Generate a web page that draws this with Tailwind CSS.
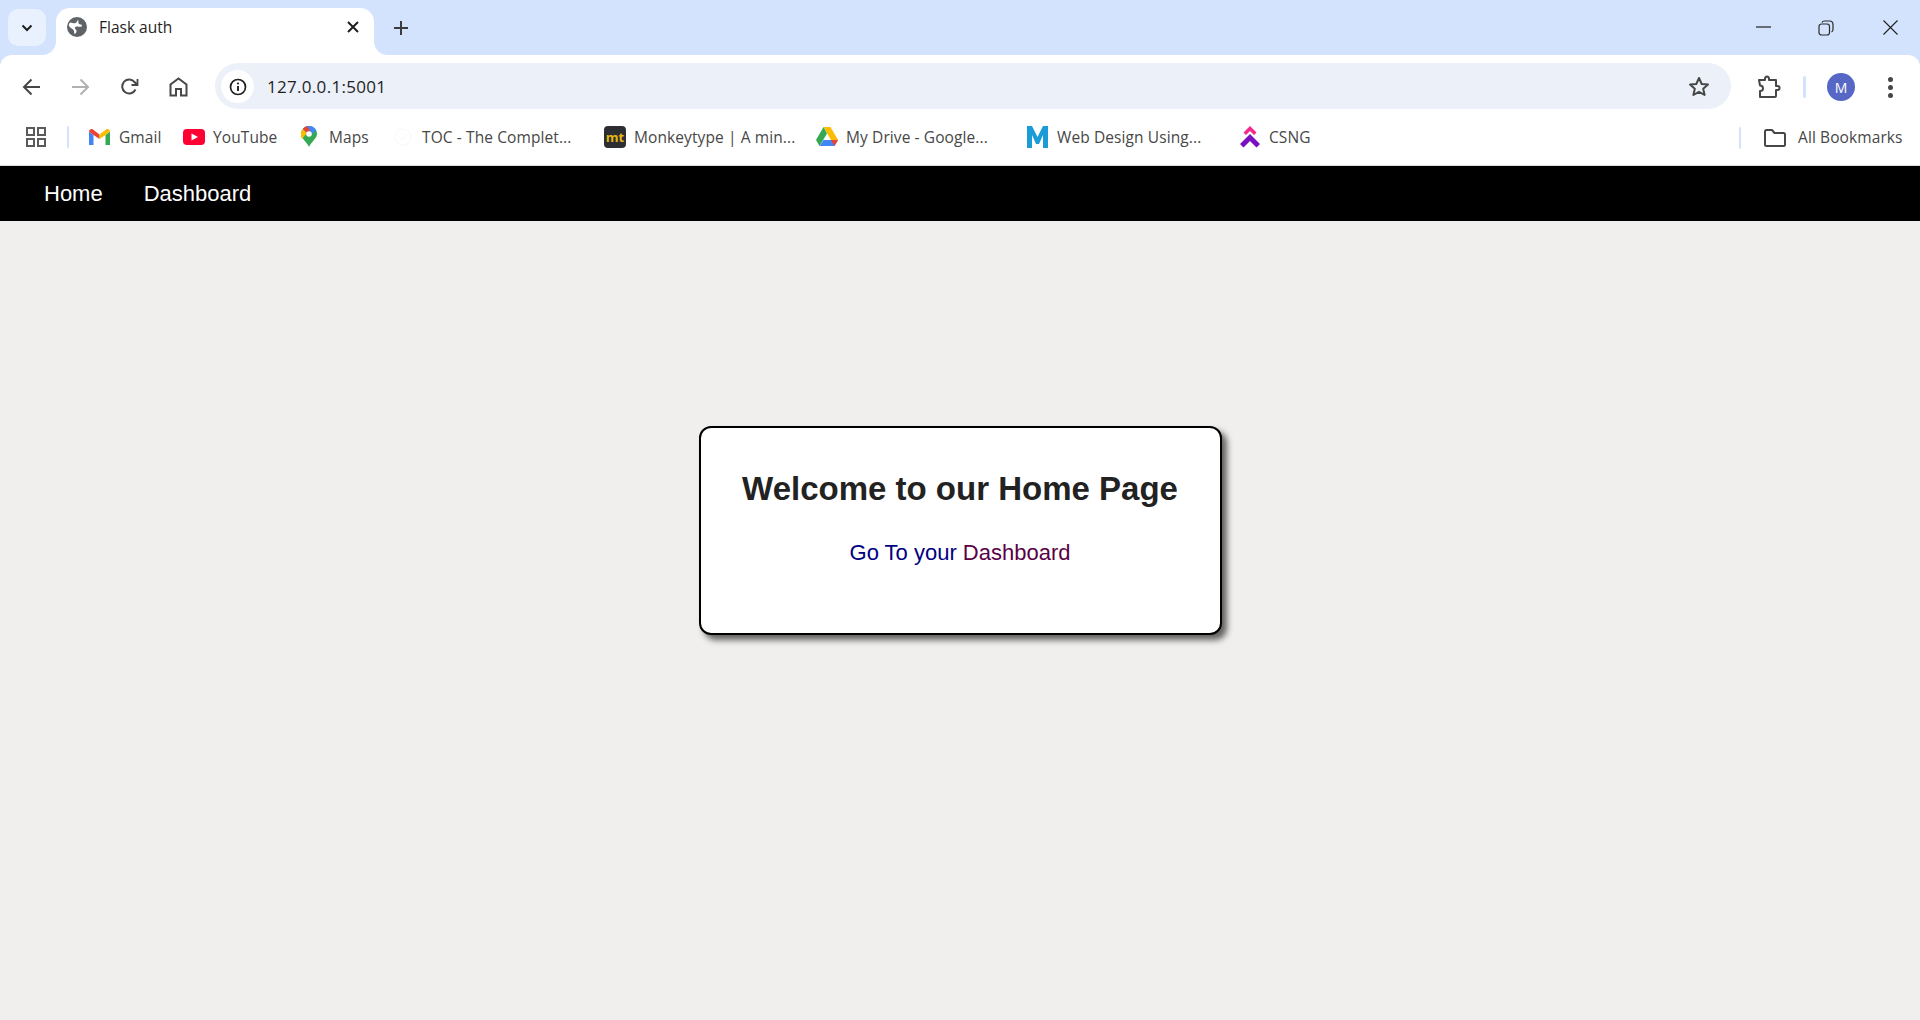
<!DOCTYPE html>
<html lang="en">
<head>
  <meta charset="UTF-8">
  <title>Flask auth</title>
  <script src="https://cdn.jsdelivr.net/npm/@tailwindcss/browser@4"></script>
</head>
<body class="h-screen overflow-hidden flex flex-col bg-[#f0efed] font-['Liberation_Sans',sans-serif]">
  <!-- Browser chrome -->
  <div class="bg-[#d3e3fd] shrink-0 font-['Open_Sans',sans-serif]">
    <!-- Tab strip -->
    <div class="h-[55px] relative">
      <div class="absolute left-[8px] top-[9px] w-[38px] h-[37px] rounded-[10px] bg-[#e9f1ff] flex items-center justify-center">
        <svg width="14" height="14" viewBox="0 0 14 14" fill="none" stroke="#1f1f1f" stroke-width="2"><path d="M2.500 4.500 7 9l4.500-4.500"/></svg>
      </div>
      <svg class="absolute left-[42px] top-[41px]" width="14" height="14" viewBox="0 0 14 14"><path d="M14 0C14 8 8 14 0 14H14z" fill="#fff"/></svg>
      <div class="absolute left-[56px] top-[8px] w-[318px] h-[47px] bg-white rounded-t-[14px] flex items-center">
        <svg class="ml-[11px] mb-[9px]" width="20" height="20" viewBox="0 0 20 20"><circle cx="10" cy="10" r="10" fill="#5f6368"/><path d="M3 5.500c2 .2 3.500 1 5 .8 1.500-.2 2-2 3-3.500 1 1.200-.2 3 .8 4 1 1 3 .5 3.200 1.700.2 1.500-2.500 1.500-4.500 1-1.500-.4-3 .6-2.500 2 .4 1.200 2 1.500 1.500 3.200-.3 1-1.200 2-2 2.500-.5-1.500 0-3-1-4.200C5.500 11.500 3 11 2 9c-.5-1 .3-2.500 1-3.500z" fill="#fff"/></svg>
        <span class="ml-[12px] mb-[7px] text-[15.5px] text-[#1f1f1f]">Flask auth</span>
        <svg class="absolute left-[291px] top-[13px]" width="12" height="12" viewBox="0 0 12 12" stroke="#1f1f1f" stroke-width="2"><path d="M1 1l10 10M11 1 1 11"/></svg>
      </div>
      <svg class="absolute left-[374px] top-[41px]" width="14" height="14" viewBox="0 0 14 14"><path d="M0 0C0 8 6 14 14 14H0z" fill="#fff"/></svg>
      <svg class="absolute left-[393px] top-[20px]" width="16" height="16" viewBox="0 0 16 16" stroke="#3c3c3c" stroke-width="2"><path d="M8 1v14M1 8h14"/></svg>
      <svg class="absolute left-[1756px] top-[26px]" width="15" height="2" viewBox="0 0 15 2"><path d="M0 1h15" stroke="#1f1f1f" stroke-width="1.200"/></svg>
      <svg class="absolute left-[1818px] top-[20px]" width="16" height="16" viewBox="0 0 16 16" fill="none" stroke="#2b2b2b" stroke-width="1.200"><rect x="1" y="4" width="10.500" height="11" rx="2.500"/><path d="M4 2.500C4.500 1.300 5.500 1 6.500 1h5C13.500 1 15 2.500 15 4.500v5c0 1-.5 2-1.500 2.500"/></svg>
      <svg class="absolute left-[1883px] top-[20px]" width="15" height="15" viewBox="0 0 15 15" stroke="#1f1f1f" stroke-width="1.100"><path d="M.5.500l14 14M14.500.500l-14 14"/></svg>
    </div>

    <!-- Toolbar -->
    <div class="h-[55px] bg-white rounded-t-[12px] relative">
      <svg class="absolute left-[22px] top-[23px]" width="19" height="18" viewBox="0 0 19 18" fill="none" stroke="#474747" stroke-width="2"><path d="M18 9H2.500M9.500 1.500 2 9l7.500 7.500"/></svg>
      <svg class="absolute left-[71px] top-[23px]" width="19" height="18" viewBox="0 0 19 18" fill="none" stroke="#b1b1b1" stroke-width="2"><path d="M1 9h15.500M9.500 1.500 17 9l-7.500 7.500"/></svg>
      <svg class="absolute left-[120px] top-[23px]" width="19" height="18" viewBox="0 0 19 18" fill="none" stroke="#474747" stroke-width="2"><path d="M15.500 11.500A7 7 0 1 1 14.800 4.300L17 6.500"/><path d="M17.500 1v6h-6" stroke-width="1.800"/></svg>
      <svg class="absolute left-[169px] top-[22px]" width="19" height="20" viewBox="0 0 19 20" fill="none" stroke="#474747" stroke-width="2"><path d="M1.500 18.500V7.500L9.500 1.500l8 6v11h-5.500v-6.500H7v6.500z"/></svg>
      <div class="absolute left-[215px] top-[8px] w-[1516px] h-[46px] rounded-full bg-[#ebf0f9] flex items-center">
        <div class="ml-[6px] mt-[1px] w-[33px] h-[33px] rounded-full bg-white flex items-center justify-center">
          <svg width="18" height="18" viewBox="0 0 18 18" fill="none"><circle cx="9" cy="9" r="7.500" stroke="#1f1f1f" stroke-width="1.700"/><path d="M9 8v5" stroke="#1f1f1f" stroke-width="1.900"/><circle cx="9" cy="5.500" r="1.100" fill="#1f1f1f"/></svg>
        </div>
        <span class="ml-[13px] mt-[1px] text-[17px] tracking-[0.3px] text-[#1f1f1f]">127.0.0.1:5001</span>
        <svg class="absolute left-[1473px] top-[13px]" width="22" height="21" viewBox="0 0 22 21" fill="none" stroke="#474747" stroke-width="2" stroke-linejoin="round"><path d="M11 2l2.700 6 6.300.6-4.800 4.200 1.400 6.200L11 15.800 5.400 19l1.400-6.200L2 8.600 8.300 8z"/></svg>
      </div>
      <svg class="absolute left-[1757px] top-[20px]" width="24" height="24" viewBox="0 0 24 24" fill="none" stroke="#474747" stroke-width="2" stroke-linejoin="round"><path d="M2 5h6V4c0-1.500 1-2.500 2-2.500s2 1 2 2.500v1h7v6h1.500a1.500 1.500 0 0 1 0 4H19v6a1 1 0 0 1-1 1H3v-6c2 0 3-1 3-2.500S5 10.500 3 10.500z"/></svg>
      <div class="absolute left-[1803px] top-[21px] w-[3px] h-[22px] rounded bg-[#d3e3fd]"></div>
      <div class="absolute left-[1827px] top-[18px] w-[28px] h-[28px] rounded-full bg-[#5767c5] flex items-center justify-center text-white text-[14px]">M</div>
      <div class="absolute left-[1888px] top-[22px] flex flex-col gap-[3px]">
        <span class="block w-[5px] h-[5px] rounded-full bg-[#474747]"></span>
        <span class="block w-[5px] h-[5px] rounded-full bg-[#474747]"></span>
        <span class="block w-[5px] h-[5px] rounded-full bg-[#474747]"></span>
      </div>
    </div>

    <!-- Bookmarks bar -->
    <div class="h-[56px] pb-[2px] bg-white border-b border-[#dadce0] flex items-center text-[15.5px] leading-[20px] text-[#474747] tracking-[0.1px] relative whitespace-nowrap">
      <svg class="ml-[26px] shrink-0" width="20" height="20" viewBox="0 0 20 20" fill="none" stroke="#5a5a5a" stroke-width="2"><rect x="1" y="1" width="7" height="7"/><rect x="12" y="1" width="7" height="7"/><rect x="1" y="12" width="7" height="7"/><rect x="12" y="12" width="7" height="7"/></svg>
      <div class="ml-[21px] w-[2px] h-[22px] bg-[#d3e3fd] rounded shrink-0"></div>
      <svg class="ml-[20px] shrink-0" width="21" height="16" viewBox="0 0 21 16"><path d="M0 2.500V16h4.500V6z" fill="#4285f4"/><path d="M16.500 6V16H21V2.500z" fill="#34a853"/><path d="M0 2.500C0 .5 2.500-.7 4 .5L10.500 5.500 10.500 10 4.500 6 0 2.500z" fill="#ea4335"/><path d="M21 2.500C21 .5 18.500-.7 17 .5L10.500 5.500V10l6-4z" fill="#fbbc04"/></svg>
      <span class="ml-[9px] w-[41px]">Gmail</span>
      <svg class="ml-[23px] shrink-0" width="22" height="16" viewBox="0 0 22 16"><rect width="22" height="16" rx="4" fill="#ff0033"/><path d="M8.500 4.500v7L15 8z" fill="#fff"/></svg>
      <span class="ml-[8px] w-[64px]">YouTube</span>
      <svg class="ml-[24px] shrink-0" width="16" height="21" viewBox="0 0 16 21"><path d="M8 21C6 16 0 12.500 0 8a8 8 0 0 1 16 0c0 4.500-6 8-8 13z" fill="#34a853"/><path d="M2 3 6 7 1 13C0 11 0 9 0 8c0-2 .7-3.700 2-5z" fill="#fbbc04"/><path d="M8 0a8 8 0 0 1 7 4L11 8 6 3 2 3C3.500 1 5.500 0 8 0z" fill="#4285f4"/><path d="M2 3l4 4 3-3-3-3.800C4.500.5 3 1.500 2 3z" fill="#ea4335"/><circle cx="8" cy="8" r="2.800" fill="#fff"/></svg>
      <span class="ml-[12px] w-[39px]">Maps</span>
      <svg class="ml-[26px] shrink-0" width="18" height="18" viewBox="0 0 18 18" fill="none" stroke="#f6f9f8"><circle cx="9" cy="9" r="8"/><path d="M5 9l3 3 5-6"/></svg>
      <span class="ml-[10px] w-[152px]">TOC - The Complet...</span>
      <div class="ml-[30px] w-[22px] h-[22px] rounded-[4px] bg-[#2c2e31] text-[#e2b714] text-[13px] leading-[22px] font-bold text-center shrink-0 tracking-normal">mt</div>
      <span class="ml-[8px] w-[158px]">Monkeytype | A min...</span>
      <svg class="ml-[24px] shrink-0" width="22" height="19" viewBox="0 0 22 19"><path d="M7.500 0h7l7.500 13h-7z" fill="#fbbc04"/><path d="M7.500 0 0 13l3.500 6L11 6.500z" fill="#34a853"/><path d="M7.500 13H22l-3.500 6h-15z" fill="#4285f4"/><path d="M15 13h7l-3.500 6z" fill="#ea4335"/></svg>
      <span class="ml-[8px] w-[146px]">My Drive - Google...</span>
      <svg class="ml-[35px] shrink-0" width="21" height="22" viewBox="0 0 21 22"><path d="M0 0h5l5.500 11L16 0h5v22h-5V9l-4 9H9L5 9v13H0z" fill="#1b9bd7"/></svg>
      <span class="ml-[9px] w-[146px]">Web Design Using...</span>
      <svg class="ml-[37px] shrink-0" width="20" height="22" viewBox="0 0 20 22"><path d="M10 0l6.500 6.500-2.500 2.500L10 5 6 9 3.500 6.500z" fill="#f4298e"/><path d="M10 8l10 10-3.500 3.500L10 15l-6.500 6.500L0 18z" fill="#7a0fc0"/></svg>
      <span class="ml-[9px]">CSNG</span>
      <div class="absolute left-[1739px] top-[17px] w-[2px] h-[22px] bg-[#d3e3fd] rounded"></div>
      <svg class="absolute left-[1764px] top-[19px]" width="22" height="18" viewBox="0 0 22 18" fill="none" stroke="#474747" stroke-width="2" stroke-linejoin="round"><path d="M1 2.500A1.500 1.500 0 0 1 2.500 1H8l2.500 3h9A1.500 1.500 0 0 1 21 5.500V15.500a1.500 1.500 0 0 1-1.500 1.500h-17A1.500 1.500 0 0 1 1 15.500z"/></svg>
      <span class="absolute left-[1798px] top-[17px]">All Bookmarks</span>
    </div>
  </div>

  <!-- Navbar -->
  <nav class="h-[55px] bg-black flex items-center pl-[44px] gap-[41px] text-white text-[22px] shrink-0">
    <a href="#">Home</a>
    <a href="#">Dashboard</a>
  </nav>

  <!-- Content -->
  <main class="flex-1 flex justify-center pt-[205px]">
    <div class="w-[523px] h-[209px] bg-white border-2 border-black rounded-[12px] shadow-[5px_5px_6px_rgba(0,0,0,0.6)] flex flex-col items-center">
      <h1 class="mt-[41px] text-[33px] leading-[40px] font-bold text-[#222]">Welcome to our Home Page</h1>
      <p class="mt-[30px] text-[22px] leading-[28px]"><a href="#" class="text-[#000080]">Go To your <span class="text-[#5a0045]">Dashboard</span></a></p>
    </div>
  </main>
</body>
</html>
